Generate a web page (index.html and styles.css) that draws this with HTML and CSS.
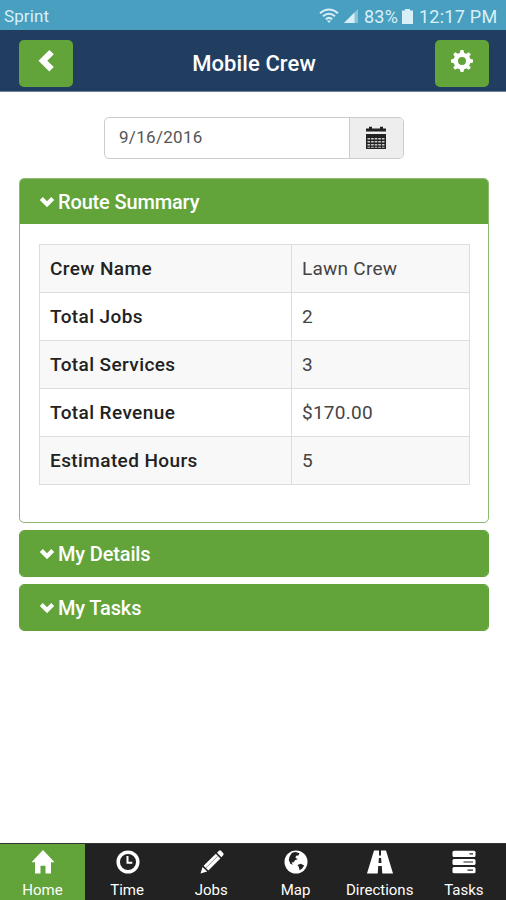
FILE: index.html
```html
<!DOCTYPE html>
<html lang="en">
<head>
<meta charset="utf-8">
<title>Mobile Crew</title>
<link rel="stylesheet" href="styles.css">
</head>
<body>
<div class="status">
  <span class="carrier">Sprint</span>
  <svg class="wifi" width="20" height="16" viewBox="0 0 20 16" fill="none" stroke="currentColor" stroke-width="2"><path d="M1 5.2Q10-2.2 19 5.2M4 8.3Q10 3.2 16 8.3M6.8 11.2Q10 8.6 13.2 11.2"/><path d="M7.8 12.5h4.4L10 15z" fill="currentColor" stroke="none"/></svg>
  <svg class="signal" width="16" height="16" viewBox="0 0 16 16"><path d="M1 15 15 1v14z" fill="currentColor" opacity=".45"/><path d="M1 15 11.500 4.500V15z" fill="currentColor"/></svg>
  <span class="percent">83%</span>
  <svg class="battery" width="11" height="15" viewBox="0 0 11 15"><path d="M3 0h5v1.500h3V15H0V1.500h3z" fill="currentColor"/></svg>
  <span class="clock">12:17 PM</span>
</div>
<header class="header">
  <button class="btn" aria-label="Back"><svg width="18" height="24" viewBox="0 0 18 24"><path d="M12.300.9 16.800 5.300 10.300 11.700 16.800 18.100 12.300 22.500 1.500 11.700z" fill="#fff"/></svg></button>
  <h1 class="title">Mobile Crew</h1>
  <button class="btn" aria-label="Settings"><svg width="24" height="24" viewBox="0 0 24 24"><circle cx="12" cy="12" r="6.300" fill="none" stroke="#fff" stroke-width="4.600"/><g fill="#fff"><path id="t" d="M9.800 4.600 10.500 1h3l.7 3.600z"/><use href="#t" transform="rotate(45 12 12)"/><use href="#t" transform="rotate(90 12 12)"/><use href="#t" transform="rotate(135 12 12)"/><use href="#t" transform="rotate(180 12 12)"/><use href="#t" transform="rotate(225 12 12)"/><use href="#t" transform="rotate(270 12 12)"/><use href="#t" transform="rotate(315 12 12)"/></g></svg></button>
</header>
<main class="main">
  <div class="date">
    <span class="date-value">9/16/2016</span>
    <span class="date-addon"><svg width="22" height="24" viewBox="0 0 22 24"><path d="M1 2.500h3V.8h3v1.700h8V.8h3v1.700h3V5.500H1zM1 8h20v15H1z" fill="#222"/><path d="M2.500 12h2.600v1.600H2.500zM6.100 12h2.600v1.600H6.100zM9.700 12h2.600v1.600H9.700zM13.300 12h2.600v1.600h-2.600zM16.900 12h2.600v1.600h-2.600zM2.500 15h2.600v1.600H2.500zM6.100 15h2.600v1.600H6.100zM9.700 15h2.600v1.600H9.700zM13.300 15h2.600v1.600h-2.600zM16.900 15h2.600v1.600h-2.600zM2.500 18h2.600v1.600H2.500zM6.100 18h2.600v1.600H6.100zM9.700 18h2.600v1.600H9.700zM13.300 18h2.600v1.600h-2.600zM16.900 18h2.600v1.600h-2.600zM2.500 20.700h2.600v1H2.500zM6.100 20.700h2.600v1H6.100zM9.700 20.700h2.600v1H9.700zM13.300 20.700h2.600v1h-2.600zM16.900 20.700h2.600v1h-2.600z" fill="#ccc"/></svg></span>
  </div>
  <section class="panel open">
    <h2 class="panel-head"><svg class="chev" width="16" height="12" viewBox="0 0 16 12"><path d="M.8 4 3.800 1 8 5.200 12.200 1 15.200 4 8 11.200z" fill="#fff"/></svg><span>Route Summary</span></h2>
    <div class="panel-body">
      <table class="summary">
        <tr><th>Crew Name</th><td>Lawn Crew</td></tr>
        <tr><th>Total Jobs</th><td>2</td></tr>
        <tr><th>Total Services</th><td>3</td></tr>
        <tr><th>Total Revenue</th><td>$170.00</td></tr>
        <tr><th>Estimated Hours</th><td>5</td></tr>
      </table>
    </div>
  </section>
  <section class="panel"><h2 class="panel-head"><svg class="chev" width="16" height="12" viewBox="0 0 16 12"><path d="M.8 4 3.800 1 8 5.200 12.200 1 15.200 4 8 11.200z" fill="#fff"/></svg><span>My Details</span></h2></section>
  <section class="panel"><h2 class="panel-head"><svg class="chev" width="16" height="12" viewBox="0 0 16 12"><path d="M.8 4 3.800 1 8 5.200 12.200 1 15.200 4 8 11.200z" fill="#fff"/></svg><span>My Tasks</span></h2></section>
</main>
<nav class="tabs">
  <a class="tab active"><svg width="26" height="26" viewBox="0 0 26 26"><path d="M13 1 24.500 13.200H21V24.500h-5.500v-7.700h-5v7.700H5V13.200H1.500z" fill="#fff"/></svg><span>Home</span></a>
  <a class="tab"><svg width="26" height="26" viewBox="0 0 26 26" fill="none" stroke="#fff"><circle cx="13" cy="13" r="9.800" stroke-width="3.500"/><path d="M12.500 7v6.800h4.800" stroke-width="2"/></svg><span>Time</span></a>
  <a class="tab"><svg width="26" height="26" viewBox="0 0 26 26" fill="#fff"><path d="M1.500 24.500 3.500 18 8.200 22.600zM4.600 16.700 16.800 4.800 21.400 9.400 9.400 21.500zM18 3.700 20 1.700Q21 .9 22 1.800L24.300 4.200Q25.100 5.200 24.200 6.200L22.400 8.200z"/><path d="M7 18.800 18.700 7.200" stroke="#222" stroke-width=".5"/></svg><span>Jobs</span></a>
  <a class="tab"><svg width="26" height="26" viewBox="0 0 26 26"><circle cx="13" cy="13" r="11.500" fill="#fff"/><path d="M9 3.700 12.500 3l4 1.200-1.200 2.300-2.300.3-.5 2 2.300 1.400-2.500.8-1.800 2.200-2 .3 1.500 2.300-2.700-1.100L5.800 11l.8-3.500zM14.500 16l3.200-1.200 3.500 1.700-2 3-2.600 1.700-.8-3.200z" fill="#222"/></svg><span>Map</span></a>
  <a class="tab"><svg width="26" height="26" viewBox="0 0 26 26"><path d="M7 1.500h12L26 24.500H0z" fill="#fff"/><path d="M13 1v5.500" stroke="#222" stroke-width="2"/><path d="M11.900 9h2.200l.4 5h-3zM11.200 17h3.600l.5 8h-4.600z" fill="#222"/></svg><span>Directions</span></a>
  <a class="tab"><svg width="26" height="26" viewBox="0 0 26 26"><g fill="#fff"><rect x="1.500" y="1.700" width="23" height="6.200" rx="1.500"/><rect x="1.500" y="9.900" width="23" height="6.200" rx="1.500"/><rect x="1.500" y="18.100" width="23" height="6.200" rx="1.500"/></g><path d="M18.500 4.800h3.500M12.500 13H22M16.500 21.200H22" stroke="#222" stroke-width="1.200"/></svg><span>Tasks</span></a>
</nav>
</body>
</html>
```

FILE: styles.css
```css
* { box-sizing: border-box; }
body {
  margin: 0;
  height: 900px;
  display: flex;
  flex-direction: column;
  background: #fff;
  font-family: Roboto, "Liberation Sans", sans-serif;
  color: #222;
}
.status {
  height: 30px;
  padding: 2px 8px 0 4px;
  display: flex;
  align-items: center;
  background: #489fbf;
  color: #d9eff8;
  font-size: 18px;
}
.carrier { margin-right: auto; font-size: 17px; letter-spacing: .1px; }
.wifi { margin-right: 4px; }
.signal { margin-right: 5px; }
.percent { width: 34px; letter-spacing: .2px; }
.battery { margin: 0 6px 0 4px; }
.clock { width: 79px; white-space: nowrap; letter-spacing: .25px; }
.header {
  height: 62px;
  padding: 10px 17px 0 19px;
  display: flex;
  justify-content: space-between;
  align-items: flex-start;
  background: #213e60;
  border-bottom: 1px solid #6d8093;
}
.btn {
  width: 54px;
  height: 47px;
  padding: 0 0 5px;
  border: 0;
  border-radius: 5px;
  background: #62a439;
  display: flex;
  align-items: center;
  justify-content: center;
}
.title {
  margin: 10px 0 0;
  font-size: 22px;
  line-height: 28px;
  font-weight: 500;
  letter-spacing: .1px;
  color: #fff;
}
.main { flex: 1; padding: 25px 17px 0 19px; }
.date {
  width: 300px;
  height: 42px;
  margin: 0 auto 19px 85px;
  display: flex;
  border: 1px solid #ccc;
  border-radius: 5px;
  overflow: hidden;
}
.date-value {
  flex: 1;
  padding-left: 14px;
  font-size: 17px;
  line-height: 39px;
  letter-spacing: .3px;
  color: #555;
}
.date-addon {
  width: 54px;
  padding-right: 2px;
  display: flex;
  align-items: center;
  justify-content: center;
  background: #eee;
  border-left: 1px solid #ccc;
}
.panel {
  height: 47px;
  margin-bottom: 7px;
  border: 1px solid #62a439;
  border-radius: 5px;
  overflow: hidden;
}
.panel.open { height: 345px; border-color: #8cba74; }
.panel-head {
  height: 45px;
  margin: 0;
  padding-left: 19px;
  display: flex;
  align-items: center;
  gap: 3px;
  background: #62a439;
  color: #fff;
  font-size: 20px;
  font-weight: 500;
  letter-spacing: -.15px;
}
.panel-body { padding: 20px 19px; }
.summary {
  width: 431px;
  table-layout: fixed;
  border-collapse: collapse;
  font-size: 19px;
}
.summary tr { height: 48px; }
.summary tr:nth-child(odd) { background: #f8f8f8; }
.summary th, .summary td {
  padding: 0 10px;
  border: 1px solid #ddd;
  text-align: left;
}
.summary th { width: 252px; font-weight: 500; letter-spacing: .4px; }
.summary td { font-weight: 400; color: #444; letter-spacing: .25px; }
.tabs {
  height: 57px;
  display: grid;
  grid-template-columns: 85px repeat(5, 1fr);
  background: #222;
  border-top: 1px solid #333;
}
.tab {
  display: flex;
  flex-direction: column;
  align-items: center;
  padding-top: 5px;
  color: #fff;
  font-size: 15px;
  line-height: 20px;
}
.tab svg { margin-left: 1px; }
.tab span { margin-top: 5px; }
.tab.active { background: #62a439; }
```
